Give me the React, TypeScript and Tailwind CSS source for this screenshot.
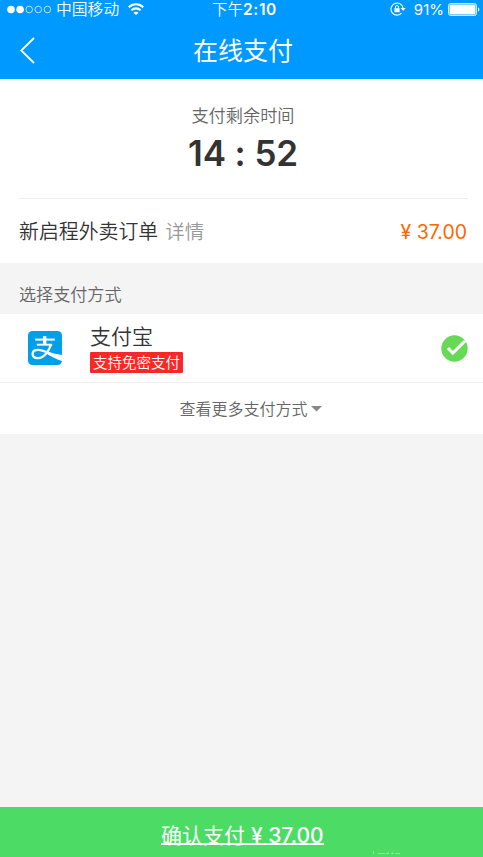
const signal = [true, true, false, false, false];

function StatusBar() {
  return (
    <div className="grid h-[19px] grid-cols-[1fr_auto_1fr] items-center pl-[7px] pr-[3px] text-[15.5px] leading-[19px]">
      <div className="flex h-[19px] items-center">
        <svg className="h-[9px] w-[45px]" viewBox="0 0 45 9">
          {signal.map((on, i) => (
            <circle
              key={i}
              cx={4 + i * 9.1}
              cy="4.5"
              r={on ? 3.8 : 3.3}
              fill={on ? "#fff" : "none"}
              stroke={on ? "none" : "#fff"}
              strokeWidth="0.7"
            />
          ))}
        </svg>
        <span className="ml-1 text-[15.8px] font-[350]">中国移动</span>
        <svg className="-mt-px ml-[9px] h-3 w-4" viewBox="0 0 16 12" fill="none" stroke="#fff" strokeWidth="2.1">
          <path d="M0.8 4.2a10.2 10.2 0 0 1 14.4 0" />
          <path d="M3.4 7.3a6.5 6.5 0 0 1 9.2 0" />
          <path d="M5.5 9.8a3.4 3.4 0 0 1 5 0L8 12z" fill="#fff" stroke="none" />
        </svg>
      </div>
      <span className="ml-0.5 h-[19px]">
        <span className="font-[350]">下午</span>
        <span className="font-semibold tracking-[0.6px]">2:10</span>
      </span>
      <div className="flex h-[19px] items-center justify-end">
        <svg className="-mt-px h-[14px] w-4" viewBox="0 0 16 14" fill="none" stroke="#fff">
          <path d="M11.6 11.2A6.1 6.1 0 1 1 13.1 6" strokeWidth="1.1" />
          <path d="M10.6 6h5l-2.5 3z" fill="#fff" stroke="none" />
          <rect x="4.4" y="6.2" width="5.2" height="4" fill="#fff" stroke="none" />
          <path d="M5.5 6.3V5a1.5 1.5 0 0 1 3 0v1.3" strokeWidth="1" />
        </svg>
        <span className="ml-2 text-[15px]">91%</span>
        <svg className="ml-1 h-[13px] w-8" viewBox="0 0 32 13">
          <rect x="0.5" y="0.5" width="28" height="12" rx="2" fill="none" stroke="#fff" strokeWidth="0.8" />
          <rect x="1.5" y="1.5" width="26" height="10" rx="0.6" fill="#fff" />
          <path d="M30 4.2a2.6 2.6 0 0 1 0 4.6z" fill="#fff" />
        </svg>
      </div>
    </div>
  );
}

function AlipayLogo() {
  return (
    <svg className="h-[34px] w-[34px]" viewBox="0 0 34 34">
      <rect width="34" height="34" rx="4.5" fill="#00a0e9" />
      <g fill="none" stroke="#fff">
        <path d="M7.2 8.6h19.6" strokeWidth="2" />
        <path d="M16.7 5.2v8.5" strokeWidth="3.4" />
        <path d="M8.8 13.7h15.4" strokeWidth="1.9" />
        <path
          d="M23 13.5C21 19.5 16.5 27.2 10 27.2c-3.6 0-5.4-1.8-5.4-4.1 0-2.4 2-4.2 5.4-4.2 5.6 0 11.3 3.7 17 6"
          strokeWidth="2.3"
        />
      </g>
      <path d="M19 20.2c4.5 1.6 9.5 3 15 3.8v6c-6-2-11.5-4.8-16-7.8z" fill="#fff" />
    </svg>
  );
}

export default function App() {
  return (
    <div className="flex h-[857px] w-full flex-col bg-[#f4f4f4] font-['Inter','Noto_Sans_CJK_SC',sans-serif] text-[#333]">
      <header className="h-[79px] bg-[#0099ff] text-white">
        <StatusBar />
        <div className="grid h-[60px] grid-cols-[1fr_auto_1fr] items-center px-5">
          <svg className="h-[27px] w-[15px]" viewBox="0 0 15 27" fill="none" stroke="#fff" strokeWidth="1.8">
            <path d="M14 1L1.2 13.5 14 26" />
          </svg>
          <h1 className="ml-[3px] pt-0.5 text-[25px] font-normal leading-[60px]">在线支付</h1>
        </div>
      </header>

      <section className="h-[184px] bg-white">
        <div className="ml-[19px] mr-[15px] h-[120px] border-b border-[#eee] pt-[25px] text-center">
          <p className="pr-px text-[17.2px] font-[350] leading-[24px] text-[#666]">支付剩余时间</p>
          <p className="mt-[5px] pr-px text-[35px] font-semibold leading-[41px] tracking-[-0.1px]">14 : 52</p>
        </div>
        <div className="flex h-16 items-center pl-[19px] pr-4 pt-[3px] text-xl">
          <span className="text-[19.9px] font-[350]">新启程外卖订单</span>
          <span className="ml-[7px] text-[19.5px] font-[350] text-[#999]">详情</span>
          <span className="ml-auto text-[19.5px] text-[#ff6600]">¥ 37.00</span>
        </div>
      </section>

      <h2 className="h-[51px] pl-[19px] text-[17.1px] font-[350] leading-[63px] text-[#666]">选择支付方式</h2>

      <section className="h-[120px] bg-white">
        <div className="flex h-[69px] items-center border-b border-[#eee] pl-7 pr-[15px]">
          <AlipayLogo />
          <div className="ml-7">
            <p className="text-[21px] font-[350] leading-[28px]">支付宝</p>
            <p className="mt-px flex h-[21px] w-[93px] items-center justify-center rounded-[1px] bg-[#f82828] text-[14.5px] font-[350] text-white">
              支持免密支付
            </p>
          </div>
          <svg className="ml-auto h-[27px] w-[27px]" viewBox="0 0 27 27">
            <circle cx="13.5" cy="13.5" r="13.2" fill="#67d957" />
            <path d="M7 13l4.8 5L24 6" fill="none" stroke="#fff" strokeWidth="3" />
          </svg>
        </div>
        <div className="flex h-[51px] items-center justify-center pl-[18px] text-base font-[350] text-[#666]">
          查看更多支付方式
          <svg className="ml-[3px] h-[6px] w-[11px]" viewBox="0 0 11 6">
            <path d="M0 0h11L5.5 5.5z" fill="#888" />
          </svg>
        </div>
      </section>

      <footer className="relative mt-auto flex h-[50px] justify-center bg-[#4cdb65] text-[21px] leading-[57px] text-white">
        <span className="ml-0.5 h-[38px] w-[163px] whitespace-nowrap border-b-2 border-white">
          确认支付 <span className="font-medium">¥ 37.00</span>
        </span>
        <svg className="absolute bottom-[3px] left-[373px] h-[3px] w-7" viewBox="0 0 28 3" stroke="#fff" strokeOpacity="0.35">
          <path d="M0.5 0v3M5 2.5h7M13 2.5h2.5V1M18 2.5h2V1M22 2.5h5" fill="none" />
        </svg>
      </footer>
    </div>
  );
}
